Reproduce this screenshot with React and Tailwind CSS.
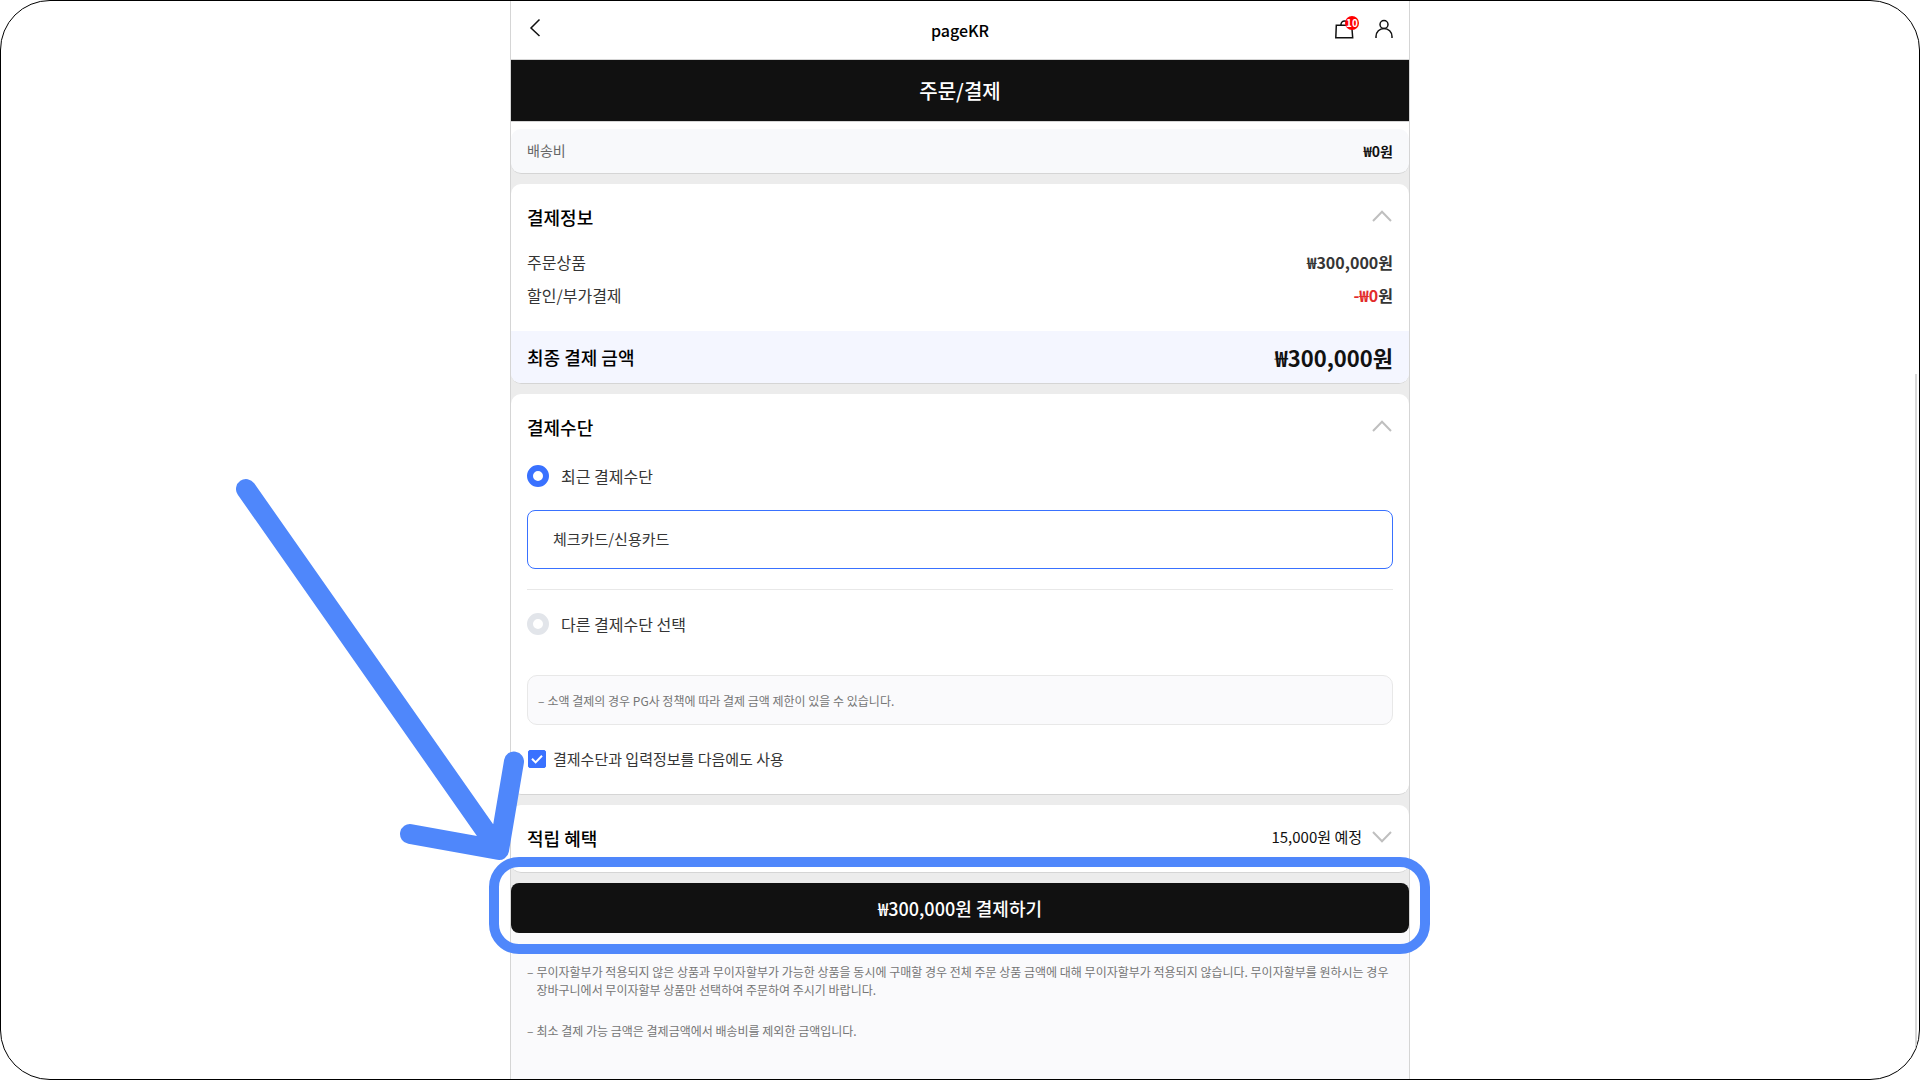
import { useState } from 'react';

const NOTES = [
  '무이자할부가 적용되지 않은 상품과 무이자할부가 가능한 상품을 동시에 구매할 경우 전체 주문 상품 금액에 대해 무이자할부가 적용되지 않습니다. 무이자할부를 원하시는 경우 장바구니에서 무이자할부 상품만 선택하여 주문하여 주시기 바랍니다.',
  '최소 결제 가능 금액은 결제금액에서 배송비를 제외한 금액입니다.',
];

const METHODS = { recent: '최근 결제수단', other: '다른 결제수단 선택' };

const Chevron = ({ down = false }) => (
  <svg className={down ? 'w-5 h-3 rotate-180' : 'w-5 h-3'} viewBox="0 0 20 12" fill="none" stroke="#bfbfbf" strokeWidth="2">
    <path d="M1 11 10 1.8 19 11" />
  </svg>
);

// White rounded block of the order form; the grey gutter comes from the parent gap.
const Card = ({ children }) => (
  <section className="bg-white border-b border-[#d5d5d5] rounded-[10px] overflow-hidden">{children}</section>
);

const CardHeader = ({ title, extra, open = true, onToggle }) => (
  <div className="flex items-center justify-between h-[62px] pt-0.5 pl-4 pr-[17px]">
    <h2 className="pt-0.5 text-lg font-medium text-black">{title}</h2>
    <div className="flex items-center gap-2.5">
      {extra && <span className="text-[15px] text-[#111]">{extra}</span>}
      <button type="button" aria-label={title} aria-expanded={open} onClick={onToggle}>
        <Chevron down={!open} />
      </button>
    </div>
  </div>
);

const MethodRadio = ({ id, value, onChange }) => (
  <label className="flex items-center gap-3 h-6 text-base text-[#353535]">
    <input
      type="radio"
      name="method"
      checked={value === id}
      onChange={() => onChange(id)}
      className="appearance-none w-[22px] h-[22px] rounded-full bg-white border-6 border-[#e2e5ea] checked:border-[#3971ff]"
    />
    {METHODS[id]}
  </label>
);

const Header = () => (
  <header className="flex items-center h-[59px] pl-4 pr-[13px] border-b border-[#d5d5d5]">
    <div className="flex-1 pb-1">
      <button type="button" aria-label="뒤로" className="block">
        <svg className="w-6 h-6" viewBox="0 0 24 24" fill="none" stroke="#111" strokeWidth="1.5">
          <path d="M12.500 3.500 4 12l8.500 8" />
        </svg>
      </button>
    </div>
    <h1 className="pr-[3px] text-base font-medium text-black">pageKR</h1>
    <div className="flex-1 flex justify-end gap-4 pb-0.5">
      <a href="#cart" aria-label="장바구니" className="relative">
        <svg className="w-6 h-6" viewBox="0 0 24 24" fill="none" stroke="#111" strokeWidth="1.5">
          <path d="M4.300 8.300h15.400l1 12.500H3.800z" />
          <path d="M9 8.300V7.500a3.500 3.500 0 0 1 7 0v.8" />
        </svg>
        <span className="absolute -top-px -right-[3px] w-3.5 h-3.5 rounded-full bg-[#f00] text-white text-[10px] leading-[14px] font-bold text-center">
          10
        </span>
      </a>
      <a href="#my" aria-label="마이페이지">
        <svg className="w-6 h-6" viewBox="0 0 24 24" fill="none" stroke="#111" strokeWidth="1.5">
          <circle cx="12" cy="7.500" r="4" />
          <path d="M4 21v-1.500a8 8 0 0 1 16 0V21" />
        </svg>
      </a>
    </div>
  </header>
);

// Arrow + outline that point the reader at the pay button.
const PayCallout = () => (
  <>
    <div className="pointer-events-none absolute -top-[26px] -bottom-[21px] -left-[22px] -right-[21px] border-10 border-[#4f87fb] rounded-[30px]" />
    <svg
      className="pointer-events-none absolute -left-[275px] -top-[405px] w-72 h-96"
      viewBox="0 0 288 384"
      fill="none"
      stroke="#4f87fb"
      strokeWidth="20"
      strokeLinecap="round"
      strokeLinejoin="round"
    >
      <path d="M10 11 263 372M278 283.500 263 372 174 356" />
    </svg>
  </>
);

const App = () => {
  const [method, setMethod] = useState('recent');
  const [remember, setRemember] = useState(true);
  const [open, setOpen] = useState({ info: true, method: true, points: false });

  const toggle = (key) => setOpen({ ...open, [key]: !open[key] });

  return (
    <div className="relative flex flex-col min-h-screen bg-white border border-black rounded-[50px] overflow-hidden font-['Noto_Sans_CJK_KR','Noto_Sans',sans-serif]">
      <main className="flex-1 flex flex-col w-full max-w-[900px] mx-auto border-x border-[#d5d5d5]">
        <Header />
        <div className="flex items-center justify-center h-[62px] bg-[#111] border-b border-[#d5d5d5] text-xl font-medium text-white">
          주문/결제
        </div>

        <div className="flex flex-col gap-2.5 pb-2.5 bg-[#ececec]">
          <div className="pt-[7px] bg-linear-to-b from-white from-50% to-[#ececec] to-50%">
            <div className="flex items-center justify-between h-[45px] px-4 bg-[#f8f9fb] border-b border-[#d5d5d5] rounded-[10px] text-sm">
              <span className="pb-0.5 text-[#666]">배송비</span>
              <span className="font-bold text-[#111]">₩0원</span>
            </div>
          </div>

          <Card>
            <CardHeader title="결제정보" open={open.info} onToggle={() => toggle('info')} />
            <dl className="px-4 pb-5 text-base text-[#353535]">
              <div className="flex items-center justify-between h-8">
                <dt>주문상품</dt>
                <dd className="font-bold">₩300,000원</dd>
              </div>
              <div className="flex items-center justify-between h-[33px]">
                <dt>할인/부가결제</dt>
                <dd className="font-bold"><span className="text-[#e22b2b]">-₩0</span>원</dd>
              </div>
            </dl>
            <div className="flex items-center justify-between h-[52px] px-4 bg-[#f4f6ff]">
              <strong className="text-lg font-medium text-black">최종 결제 금액</strong>
              <strong className="text-[22px] font-bold text-[#111]">₩300,000원</strong>
            </div>
          </Card>

          <Card>
            <CardHeader title="결제수단" open={open.method} onToggle={() => toggle('method')} />
            <div className="px-4 pt-2 pb-[26px]">
              <MethodRadio id="recent" value={method} onChange={setMethod} />
              <button type="button" className="block w-full h-[59px] mt-[22px] px-[25px] border border-[#3971ff] rounded-lg text-left text-[15px] text-[#353535]">
                체크카드/신용카드
              </button>
              <hr className="mt-5 mb-[22px] border-[#e8e8e8]" />
              <MethodRadio id="other" value={method} onChange={setMethod} />
              <p className="flex items-center gap-[3px] h-[50px] mt-[39px] px-2.5 pt-0.5 bg-[#fafafc] border border-[#e8e8e8] rounded-[10px] text-xs text-[#757575]">
                <span>–</span>소액 결제의 경우 PG사 정책에 따라 결제 금액 제한이 있을 수 있습니다.
              </p>
              <label className="flex items-center gap-[7px] mt-[25px] h-[18px] text-[15px] text-[#353535]">
                <span className="relative w-[18px] h-[18px] ml-px">
                  <input
                    type="checkbox"
                    checked={remember}
                    onChange={(e) => setRemember(e.target.checked)}
                    className="block appearance-none w-[18px] h-[18px] rounded-xs border border-[#d5d5d5] checked:bg-[#3971ff] checked:border-[#3971ff]"
                  />
                  <svg className="pointer-events-none absolute inset-0" viewBox="0 0 18 18" fill="none" stroke="#fff" strokeWidth="2">
                    <path d="m4 8.800 3.600 3.600L14 5.800" />
                  </svg>
                </span>
                결제수단과 입력정보를 다음에도 사용
              </label>
            </div>
          </Card>

          <Card>
            <CardHeader title="적립 혜택" extra="15,000원 예정" open={open.points} onToggle={() => toggle('points')} />
            <div className="h-[5px]" />
          </Card>
        </div>

        <div className="relative bg-linear-to-b from-[#ececec] from-50% to-[#fafafc] to-50%">
          <button type="button" className="block w-full h-[50px] bg-[#111] rounded-lg text-lg font-medium text-white">
            ₩300,000원 결제하기
          </button>
          <PayCallout />
        </div>

        <ul className="flex-1 flex flex-col gap-[23px] px-4 pt-[30px] pb-4 bg-[#fafafc] text-xs leading-[18px] text-[#757575]">
          {NOTES.map((note) => (
            <li key={note} className="flex gap-[3px]">
              <span>–</span>
              <span>{note}</span>
            </li>
          ))}
        </ul>
      </main>

      {/* overlay scrollbar thumb */}
      <div className="absolute right-0.5 top-[373px] bottom-0 w-0.5 bg-[#d8d8d8]" />
    </div>
  );
};

export default App;
